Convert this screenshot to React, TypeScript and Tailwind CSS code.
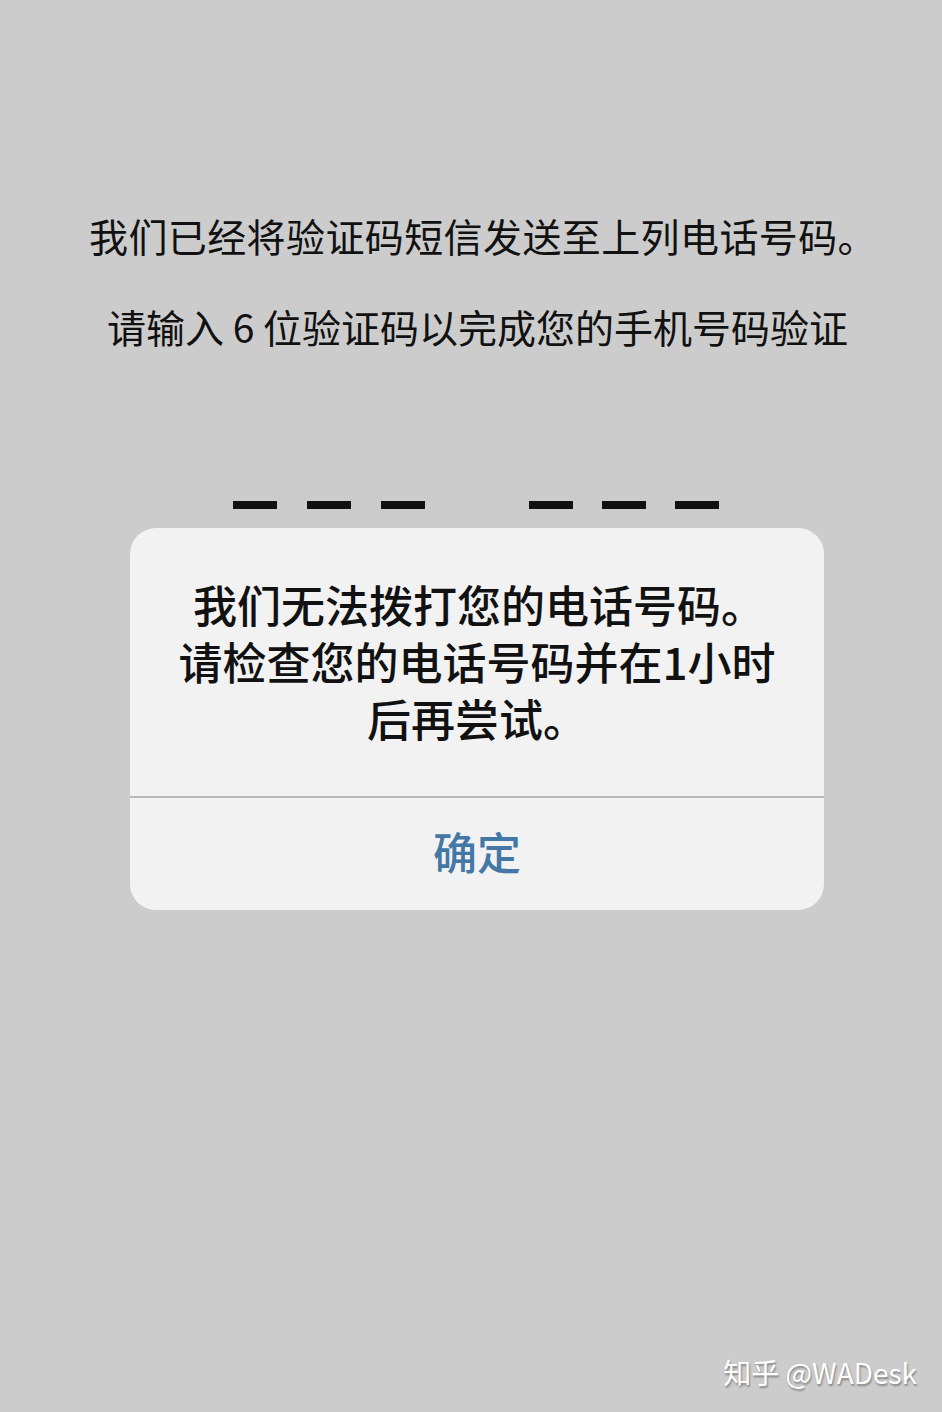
import React from "react";

const cjk = { fontFamily: '"Noto Sans CJK SC", "Noto Sans", sans-serif' };

function Dash() {
  return <div className="h-[8px] w-[44px] bg-[#111111]" />;
}

export default function App() {
  return (
    <div className="flex h-[1412px] w-[942px] flex-col bg-[#cccccc] text-[#111111]" style={cjk}>
      <div className="pt-[216px] pl-[89px] text-[39px] leading-[38px] whitespace-nowrap tracking-[0.4px]">
        我们已经将验证码短信发送至上列电话号码。
      </div>
      <div className="mt-[53px] pl-[107px] text-[39px] leading-[38px] whitespace-nowrap">
        请输入 6 位验证码以完成您的手机号码验证
      </div>
      <div className="mt-[156px] flex pl-[233px]">
        <div className="flex gap-[30px]">
          <Dash />
          <Dash />
          <Dash />
        </div>
        <div className="ml-[104px] flex gap-[29px]">
          <Dash />
          <Dash />
          <Dash />
        </div>
      </div>
      <div className="ml-[130px] mt-[19px] flex h-[382px] w-[694px] flex-col overflow-hidden rounded-[26px] bg-[#f2f2f2]">
        <div className="flex h-[268px] flex-col items-center pt-[48px] text-[44px] font-medium leading-[57px] text-[#111111]">
          <span className="whitespace-nowrap pl-[4px]">我们无法拨打您的电话号码。</span>
          <span className="whitespace-nowrap">请检查您的电话号码并在1小时</span>
          <span className="whitespace-nowrap">后再尝试。</span>
        </div>
        <div className="h-[1.5px] bg-[#b9b9b9]" />
        <div className="flex flex-1 items-center justify-center pb-[6px] text-[44px] font-medium text-[#4378a6]">
          确定
        </div>
      </div>
      <div className="flex-1" />
      <div className="flex justify-end pb-[22px] pr-[25px]">
        <span className="text-[28px] leading-[36px] text-white [text-shadow:1px_2px_2px_rgba(0,0,0,0.35)]" style={cjk}>
          知乎 @WADesk
        </span>
      </div>
    </div>
  );
}
